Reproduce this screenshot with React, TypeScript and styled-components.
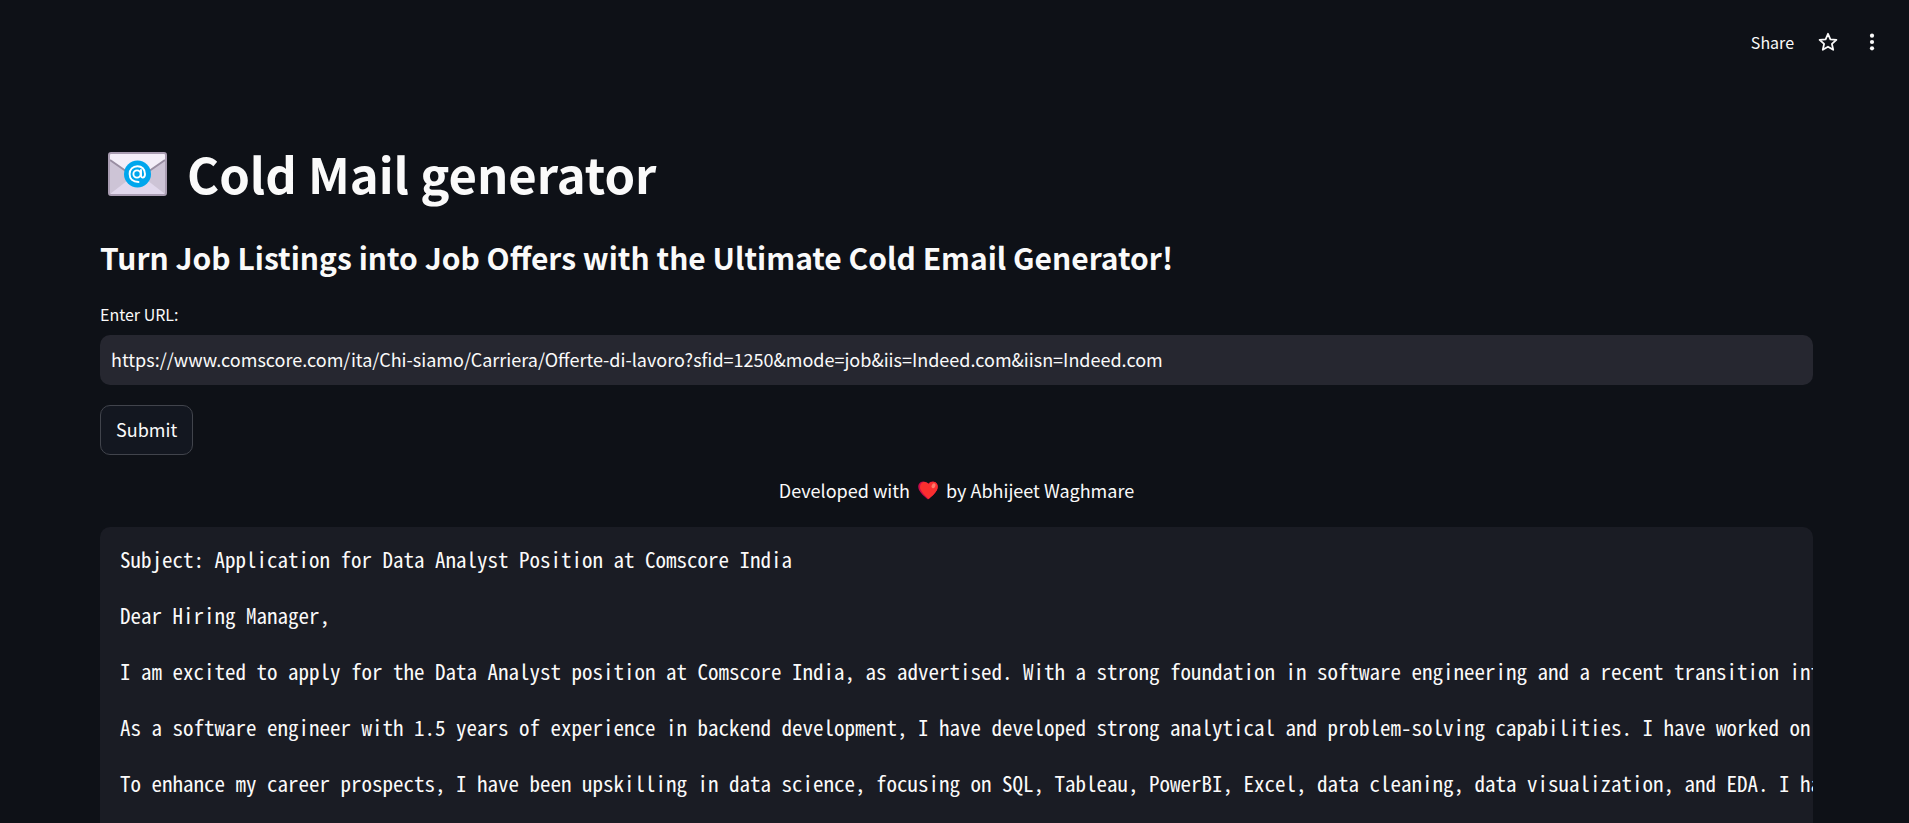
import React, { useState } from "react";
import styled, { createGlobalStyle } from "styled-components";

const GlobalStyle = createGlobalStyle`
  *, *::before, *::after { box-sizing: border-box; }
  html { background: #0e1117; overflow: hidden; }
  body {
    margin: 0;
    background: #0e1117;
    color: #fafafa;
    font-family: "Source Sans Pro", "Noto Sans CJK SC", "Noto Sans", sans-serif;
    font-size: 18px;
    line-height: 30px;
  }
  button, input { font: inherit; color: inherit; }
`;

const Page = styled.div`
  height: 100vh;
  overflow: hidden;
`;

const Toolbar = styled.header`
  display: flex;
  justify-content: flex-end;
  align-items: center;
  height: 84px;
  padding: 0 19px;
  gap: 8px;
`;

const ToolbarButton = styled.button`
  display: flex;
  align-items: center;
  justify-content: center;
  height: 32px;
  padding: 0 8px;
  border: 0;
  background: transparent;
  font-size: 16px;
  line-height: 32px;
  cursor: pointer;
`;

const Main = styled.main`
  display: flex;
  flex-direction: column;
  padding: 56px 96px 0 100px;
`;

const Title = styled.h1`
  display: flex;
  align-items: flex-start;
  gap: 20px;
  margin: 0;
  padding-left: 8px;
  font-size: 49px;
  font-weight: 700;
  line-height: 66px;

  svg { margin-top: 12px; }
`;

const Subtitle = styled.h2`
  margin: 28px 0 0;
  font-size: 30px;
  font-weight: 700;
  line-height: 46px;
`;

const Form = styled.form`
  display: flex;
  flex-direction: column;
  align-items: flex-start;
  margin-top: 20px;
`;

const Label = styled.label`
  font-size: 16px;
  line-height: 28px;
`;

const UrlInput = styled.input`
  width: 100%;
  height: 50px;
  margin-top: 7px;
  padding: 0 11px 2px;
  border: 0;
  border-radius: 10px;
  outline: 0;
  background: #262730;
`;

const SubmitButton = styled.button`
  height: 50px;
  margin-top: 20px;
  padding: 0 15px 2px;
  border: 1px solid #41444c;
  border-radius: 10px;
  background: #131720;
  cursor: pointer;
`;

const Credit = styled.p`
  display: flex;
  justify-content: center;
  align-items: center;
  gap: 8px;
  margin: 20px 0 22px;
`;

const CodeBlock = styled.pre`
  margin: 0;
  padding: 18px 20px;
  overflow: hidden;
  border-radius: 10px;
  background: #1a1c24;
  font-family: "Noto Sans Mono CJK SC", "Liberation Mono", monospace;
  font-size: 21px;
  line-height: 28px;
`;

const EnvelopeIcon = () => (
  <svg width="59" height="44" viewBox="0 0 59 44" aria-label="E-mail" role="img">
    <rect x="1" y="1" width="57" height="42" rx="2" fill="#cdc4d6" />
    <path d="M2 42 L24 25 H35 L57 42 Z" fill="#e1d8ec" />
    <path d="M2 2 H57 V8 L34 25 H25 L2 8 Z" fill="#f3eef8" />
    <path d="M2 8 L25 24 M57 8 L34 24" stroke="#998ea2" strokeWidth="2" fill="none" />
    <rect x="1" y="1" width="57" height="42" rx="2" fill="none" stroke="#a99db2" strokeWidth="2" />
    <circle cx="29.500" cy="22" r="13.500" fill="#00a6ed" />
    <circle cx="29" cy="22" r="3.600" fill="none" stroke="#fff" strokeWidth="1.900" />
    <path
      d="M33 18 V23.500 C33 26.500 37 26.500 37 22 C37 17 33.800 14.200 29.400 14.200 C24.800 14.200 21.600 17.600 21.600 22 C21.600 26.800 24.800 30 30.500 30"
      fill="none"
      stroke="#fff"
      strokeWidth="1.900"
      strokeLinecap="round"
    />
  </svg>
);

const HeartIcon = () => (
  <svg width="20" height="19" viewBox="0 0 20 19" aria-label="love" role="img">
    <path
      d="M10 3 C8 0 4.500 0 2.500 1.200 C0 3 -0.300 6.500 1 9 C2.800 12.500 6.500 15.500 9.300 18 Q10 18.600 10.700 18 C13.500 15.500 17.200 12.500 19 9 C20.300 6.500 20 3 17.500 1.200 C15.500 0 12 0 10 3 Z"
      fill="#ca0b4a"
    />
    <path
      d="M10.800 3 C12.200 0.500 15.500 0.200 17.500 1.200 C20 3 20.300 6.500 19 9 C17.200 12.500 13.500 15.500 10.700 18 C7.500 15 3.500 11.500 2.300 8 C1.500 5 2.500 2 5 1.200 C7.500 0.700 9.500 1.500 10.800 3 Z"
      fill="#f92f2f"
    />
    <ellipse cx="15.500" cy="4.800" rx="1.800" ry="2.600" transform="rotate(28 15.500 4.800)" fill="#fc7a6c" />
  </svg>
);

const StarIcon = () => (
  <svg width="20" height="20" viewBox="0 0 20 20" aria-hidden="true">
    <path
      d="M10 1.800 L12.400 7.300 L18.400 7.900 L13.900 11.900 L15.200 17.800 L10 14.700 L4.800 17.800 L6.100 11.900 L1.600 7.900 L7.600 7.300 Z"
      fill="none"
      stroke="#fafafa"
      strokeWidth="1.800"
      strokeLinejoin="round"
    />
  </svg>
);

const DotsIcon = () => (
  <svg width="20" height="20" viewBox="0 0 20 20" aria-hidden="true" fill="#fafafa">
    <circle cx="10" cy="3.700" r="2.100" />
    <circle cx="10" cy="10" r="2.100" />
    <circle cx="10" cy="16.300" r="2.100" />
  </svg>
);

const letter = [
  "Subject: Application for Data Analyst Position at Comscore India",
  "Dear Hiring Manager,",
  "I am excited to apply for the Data Analyst position at Comscore India, as advertised. With a strong foundation in software engineering and a recent transition into",
  "As a software engineer with 1.5 years of experience in backend development, I have developed strong analytical and problem-solving capabilities. I have worked on",
  "To enhance my career prospects, I have been upskilling in data science, focusing on SQL, Tableau, PowerBI, Excel, data cleaning, data visualization, and EDA. I have",
  "",
].join("\n\n");

export default function App() {
  const [url, setUrl] = useState(
    "https://www.comscore.com/ita/Chi-siamo/Carriera/Offerte-di-lavoro?sfid=1250&mode=job&iis=Indeed.com&iisn=Indeed.com"
  );

  return (
    <Page>
      <GlobalStyle />
      <Toolbar>
        <ToolbarButton type="button">Share</ToolbarButton>
        <ToolbarButton type="button" aria-label="Favorite">
          <StarIcon />
        </ToolbarButton>
        <ToolbarButton type="button" aria-label="Menu">
          <DotsIcon />
        </ToolbarButton>
      </Toolbar>
      <Main>
        <Title>
          <EnvelopeIcon />
          Cold Mail generator
        </Title>
        <Subtitle>Turn Job Listings into Job Offers with the Ultimate Cold Email Generator!</Subtitle>
        <Form onSubmit={(event) => event.preventDefault()}>
          <Label htmlFor="url">Enter URL:</Label>
          <UrlInput id="url" type="text" value={url} onChange={(event) => setUrl(event.target.value)} />
          <SubmitButton type="submit">Submit</SubmitButton>
        </Form>
        <Credit>
          <span>Developed with</span>
          <HeartIcon />
          <span>by Abhijeet Waghmare</span>
        </Credit>
        <CodeBlock>{letter}</CodeBlock>
      </Main>
    </Page>
  );
}
